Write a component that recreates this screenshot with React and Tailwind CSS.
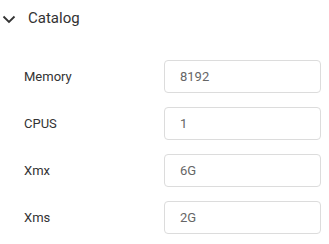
import React from "react";

const fields = [
  { label: "Memory", value: "8192" },
  { label: "CPUS", value: "1" },
  { label: "Xmx", value: "6G" },
  { label: "Xms", value: "2G" },
];

const App = () => {
  return (
    <div className="w-[329px] h-[244px] bg-white font-['Roboto',sans-serif]">
      <div className="flex items-center h-[36px] pt-[1px]">
        <svg width="24" height="24" viewBox="0 0 24 24" className="ml-[-3px] text-[#333]">
          <path d="M6.5 9.5 L12 15 L17.5 9.5" fill="none" stroke="currentColor" strokeWidth="1.8" />
        </svg>
        <span className="ml-[7px] text-[15px] text-[#333]">Catalog</span>
      </div>
      <div className="flex flex-col gap-[14px] pt-[24px]">
        {fields.map((f) => (
          <div key={f.label} className="flex items-center">
            <label className="w-[164px] pl-[24px] text-[13px] text-[#333]">{f.label}</label>
            <div className="w-[157px] h-[33px] border border-[#dcdcdc] rounded-[4px] flex items-center pl-[15px] text-[13px] text-[#666]">
              {f.value}
            </div>
          </div>
        ))}
      </div>
    </div>
  );
};

export default App;
